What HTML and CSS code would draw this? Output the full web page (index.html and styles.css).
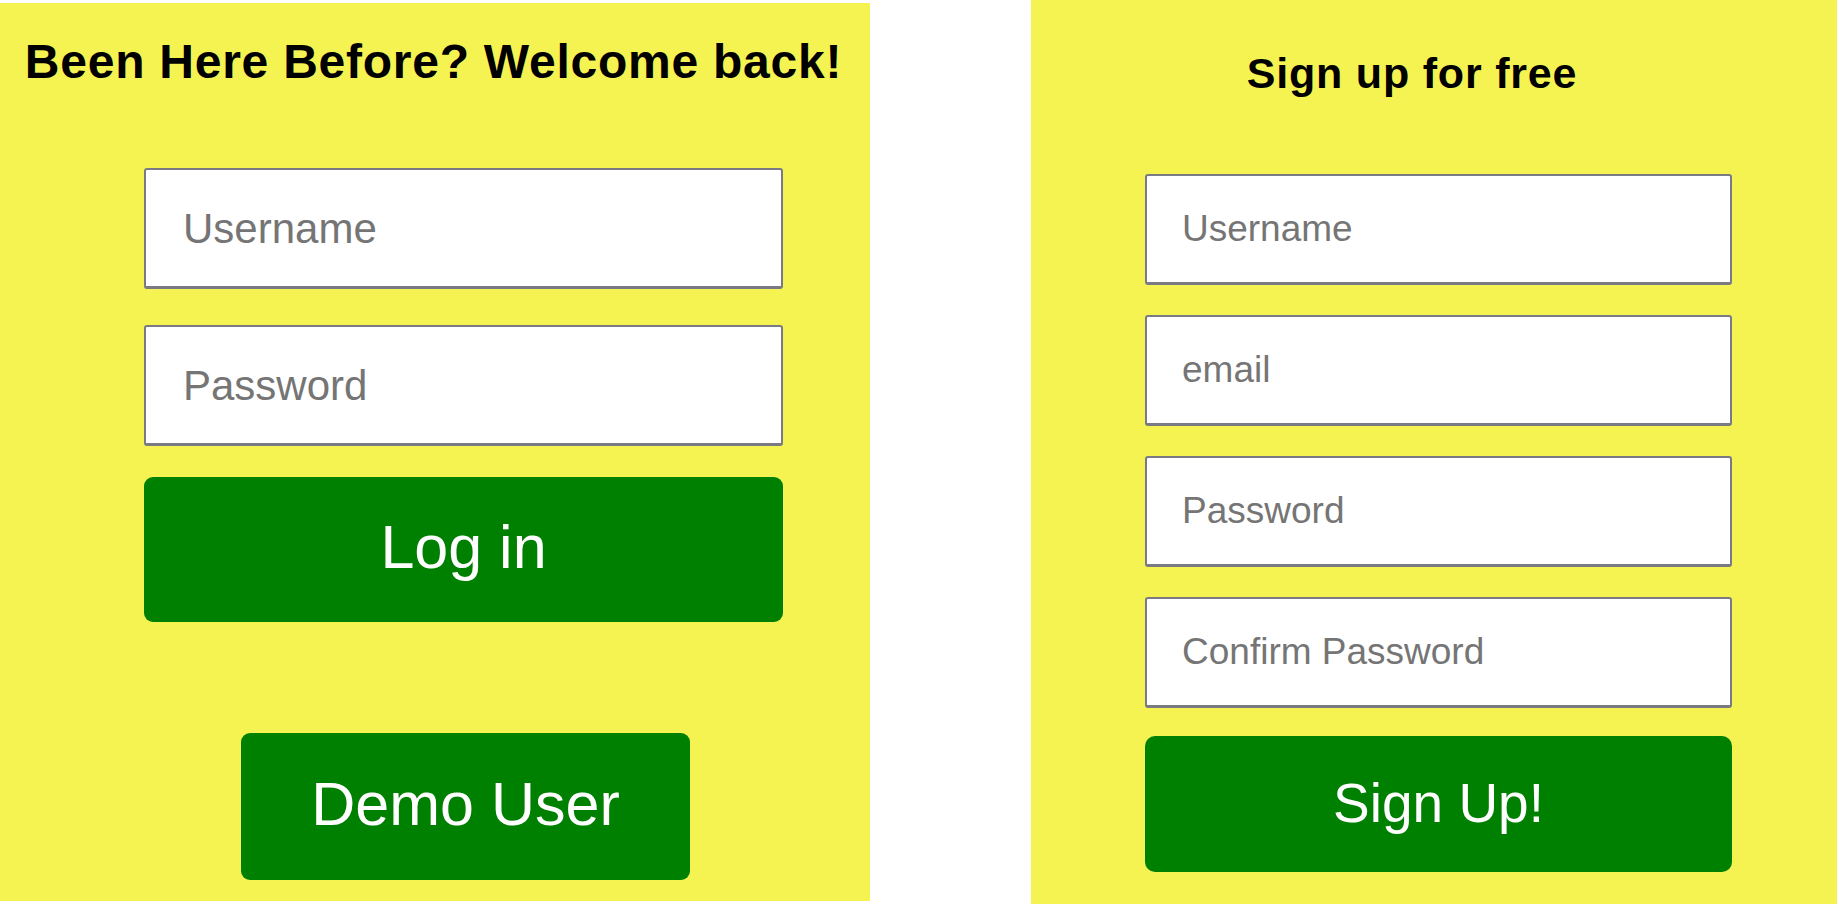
FILE: index.html
```html
<!DOCTYPE html>
<html lang="en">
<head>
<meta charset="utf-8">
<title>Login / Sign up</title>
<link rel="stylesheet" href="styles.css">
</head>
<body>
<div class="page">
  <section class="panel panel-login">
    <h2 class="title title-login">Been Here Before? Welcome back!</h2>
    <form class="form form-login">
      <input class="field field-login" type="text" placeholder="Username">
      <input class="field field-login field-gap-login" type="password" placeholder="Password">
      <button class="btn btn-login" type="button">Log in</button>
      <button class="btn btn-demo" type="button">Demo User</button>
    </form>
  </section>
  <section class="panel panel-signup">
    <h2 class="title title-signup">Sign up for free</h2>
    <form class="form form-signup">
      <input class="field field-signup" type="text" placeholder="Username">
      <input class="field field-signup" type="email" placeholder="email">
      <input class="field field-signup" type="password" placeholder="Password">
      <input class="field field-signup" type="password" placeholder="Confirm Password">
      <button class="btn btn-signup" type="button">Sign Up!</button>
    </form>
  </section>
</div>
</body>
</html>
```

FILE: styles.css
```css
* {
  box-sizing: border-box;
}

html, body {
  margin: 0;
  padding: 0;
  background: #ffffff;
}

body {
  font-family: "Liberation Sans", Arial, sans-serif;
  width: 1837px;
  height: 904px;
  overflow: hidden;
}

.page {
  display: flex;
  align-items: flex-start;
  gap: 161px;
}

.panel {
  background: #f5f352;
  display: flex;
  flex-direction: column;
}

.panel-login {
  width: 870px;
  height: 898px;
  margin-top: 3px;
  padding-top: 33px;
}

.panel-signup {
  width: 806px;
  height: 904px;
  padding-top: 48px;
}

.title {
  margin: 0;
  font-weight: bold;
  color: #000;
  text-align: center;
  white-space: nowrap;
}

.title-login {
  font-size: 48px;
  line-height: 52px;
  letter-spacing: 0.75px;
  padding-right: 3px;
}

.title-signup {
  font-size: 43px;
  line-height: 50px;
  letter-spacing: 0.8px;
  padding-right: 44px;
}

.form {
  display: flex;
  flex-direction: column;
  align-items: center;
}

.form-login {
  margin-top: 80px;
  margin-left: 144px;
  width: 639px;
}

.form-signup {
  margin-top: 76px;
  margin-left: 114px;
  width: 587px;
  gap: 30px;
}

.field {
  display: block;
  width: 100%;
  margin: 0;
  background: #fff;
  border: 2px solid #7a7a84;
  border-bottom-width: 3px;
  border-radius: 3px;
  font-family: "Liberation Sans", Arial, sans-serif;
  color: #333;
  outline: none;
}

.field::placeholder {
  color: #757575;
}

.field-login {
  height: 121px;
  font-size: 42px;
  padding: 1px 0 0 37px;
}

.field-gap-login {
  margin-top: 36px;
}

.field-signup {
  height: 111px;
  font-size: 37px;
  padding: 0 0 1px 35px;
}

.btn {
  display: flex;
  align-items: center;
  justify-content: center;
  border: none;
  background: #008000;
  color: #ffffff;
  font-family: "Liberation Sans", Arial, sans-serif;
  cursor: pointer;
  padding: 0;
}

.btn-login {
  width: 100%;
  height: 145px;
  margin-top: 31px;
  border-radius: 9px;
  font-size: 61px;
  padding-bottom: 6px;
}

.btn-demo {
  width: 449px;
  height: 147px;
  margin-top: 111px;
  margin-left: 4px;
  border-radius: 9px;
  font-size: 61px;
  padding-bottom: 6px;
}

.btn-signup {
  width: 100%;
  height: 136px;
  margin-top: -2px;
  border-radius: 10px;
  font-size: 55px;
  padding-bottom: 2px;
}
```
